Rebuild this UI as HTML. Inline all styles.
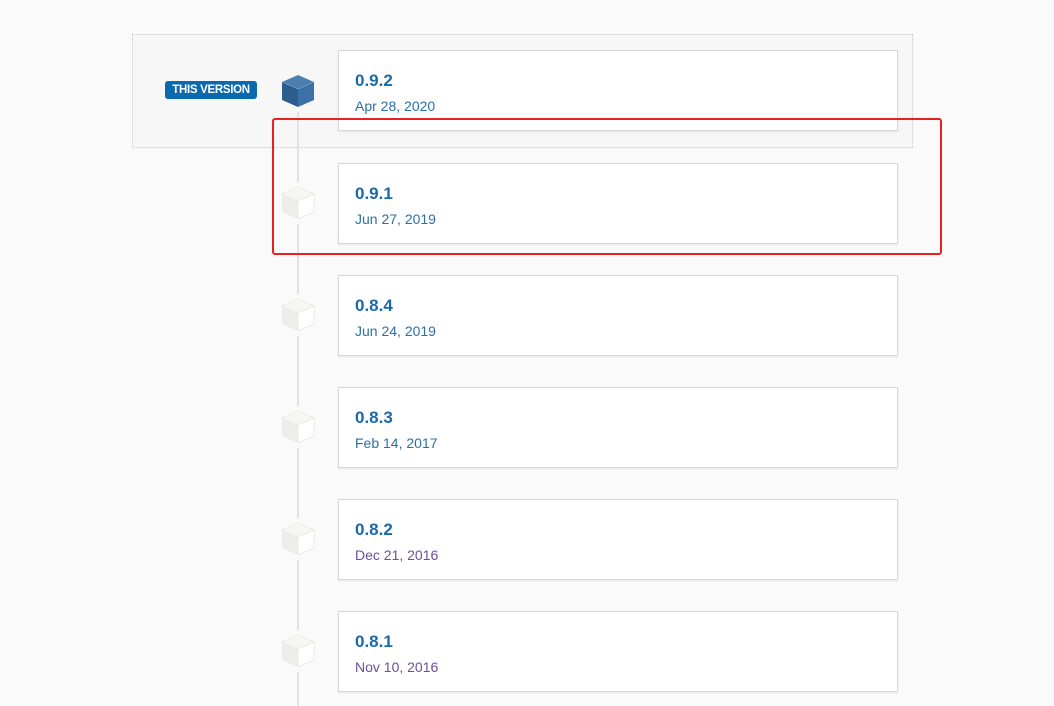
<!DOCTYPE html>
<html><head><style>
body{margin:0;width:1054px;height:706px;background:#fafafa;position:relative;overflow:hidden;font-family:"Liberation Sans",sans-serif}
.dot{position:absolute;left:132px;top:34px;width:779px;height:112px;border:1px dotted #c8c8c8;background:#f7f7f7}
.line{position:absolute;left:297px;width:2px;background:#e2e2e2}
.card{position:absolute;left:338px;width:558px;height:79px;background:#fff;border:1px solid #d8d8d8;box-shadow:0 1px 2px rgba(0,0,0,.08)}
.v{position:absolute;left:16px;top:20px;font-size:17px;font-weight:bold;color:#1a6aa8}
.d{position:absolute;left:16px;top:47px;font-size:14px;color:#2a6fa8}
.cube{position:absolute;left:281px;width:34px;height:34px}
.badge{position:absolute;left:165px;top:81px;width:92px;height:18px;background:#0a6aaf;border-radius:3px;color:#fff;font-size:11.5px;font-weight:bold;text-align:center;line-height:18px;letter-spacing:-.3px}
.red{position:absolute;left:272px;top:118px;width:666px;height:133px;border:2px solid #e8201e;border-radius:3px}
</style></head><body>
<div class="dot"></div>
<div class="line" style="top:112px;height:70px"></div>
<div class="line" style="top:224px;height:70px"></div>
<div class="line" style="top:336px;height:70px"></div>
<div class="line" style="top:448px;height:70px"></div>
<div class="line" style="top:560px;height:70px"></div>
<div class="line" style="top:672px;height:34px"></div>
<div class="badge">THIS VERSION</div>
<svg class="cube" style="top:74px" viewBox="0 0 34 34"><polygon points="17,1 33,8 17,15 1,8" fill="#4a7fb0"/><polygon points="1,8 17,15 17,33 1,26" fill="#2d5d8e"/><polygon points="33,8 17,15 17,33 33,26" fill="#3a72a8"/><polyline points="1,8 17,15 33,8 M17,15 17,33" fill="none" stroke="#7fa6cc" stroke-width=".6"/></svg>
<svg class="cube" style="top:186px" viewBox="0 0 34 34"><polygon points="17,1 33,8 17,15 1,8" fill="#f6f6f3" stroke="#e6e6e3" stroke-width=".7"/><polygon points="1,8 17,15 17,33 1,26" fill="#ededea"/><polygon points="33,8 17,15 17,33 33,26" fill="#fff" stroke="#e6e6e3" stroke-width=".7"/></svg>
<svg class="cube" style="top:298px" viewBox="0 0 34 34"><polygon points="17,1 33,8 17,15 1,8" fill="#f6f6f3" stroke="#e6e6e3" stroke-width=".7"/><polygon points="1,8 17,15 17,33 1,26" fill="#ededea"/><polygon points="33,8 17,15 17,33 33,26" fill="#fff" stroke="#e6e6e3" stroke-width=".7"/></svg>
<svg class="cube" style="top:410px" viewBox="0 0 34 34"><polygon points="17,1 33,8 17,15 1,8" fill="#f6f6f3" stroke="#e6e6e3" stroke-width=".7"/><polygon points="1,8 17,15 17,33 1,26" fill="#ededea"/><polygon points="33,8 17,15 17,33 33,26" fill="#fff" stroke="#e6e6e3" stroke-width=".7"/></svg>
<svg class="cube" style="top:522px" viewBox="0 0 34 34"><polygon points="17,1 33,8 17,15 1,8" fill="#f6f6f3" stroke="#e6e6e3" stroke-width=".7"/><polygon points="1,8 17,15 17,33 1,26" fill="#ededea"/><polygon points="33,8 17,15 17,33 33,26" fill="#fff" stroke="#e6e6e3" stroke-width=".7"/></svg>
<svg class="cube" style="top:634px" viewBox="0 0 34 34"><polygon points="17,1 33,8 17,15 1,8" fill="#f6f6f3" stroke="#e6e6e3" stroke-width=".7"/><polygon points="1,8 17,15 17,33 1,26" fill="#ededea"/><polygon points="33,8 17,15 17,33 33,26" fill="#fff" stroke="#e6e6e3" stroke-width=".7"/></svg>
<div class="card" style="top:50px"><div class="v">0.9.2</div><div class="d">Apr 28, 2020</div></div>
<div class="card" style="top:163px"><div class="v">0.9.1</div><div class="d">Jun 27, 2019</div></div>
<div class="card" style="top:275px"><div class="v">0.8.4</div><div class="d">Jun 24, 2019</div></div>
<div class="card" style="top:387px"><div class="v">0.8.3</div><div class="d">Feb 14, 2017</div></div>
<div class="card" style="top:499px"><div class="v">0.8.2</div><div class="d" style="color:#6a4f9e">Dec 21, 2016</div></div>
<div class="card" style="top:611px"><div class="v">0.8.1</div><div class="d" style="color:#6a4f9e">Nov 10, 2016</div></div>
<div class="red"></div>
</body></html>
